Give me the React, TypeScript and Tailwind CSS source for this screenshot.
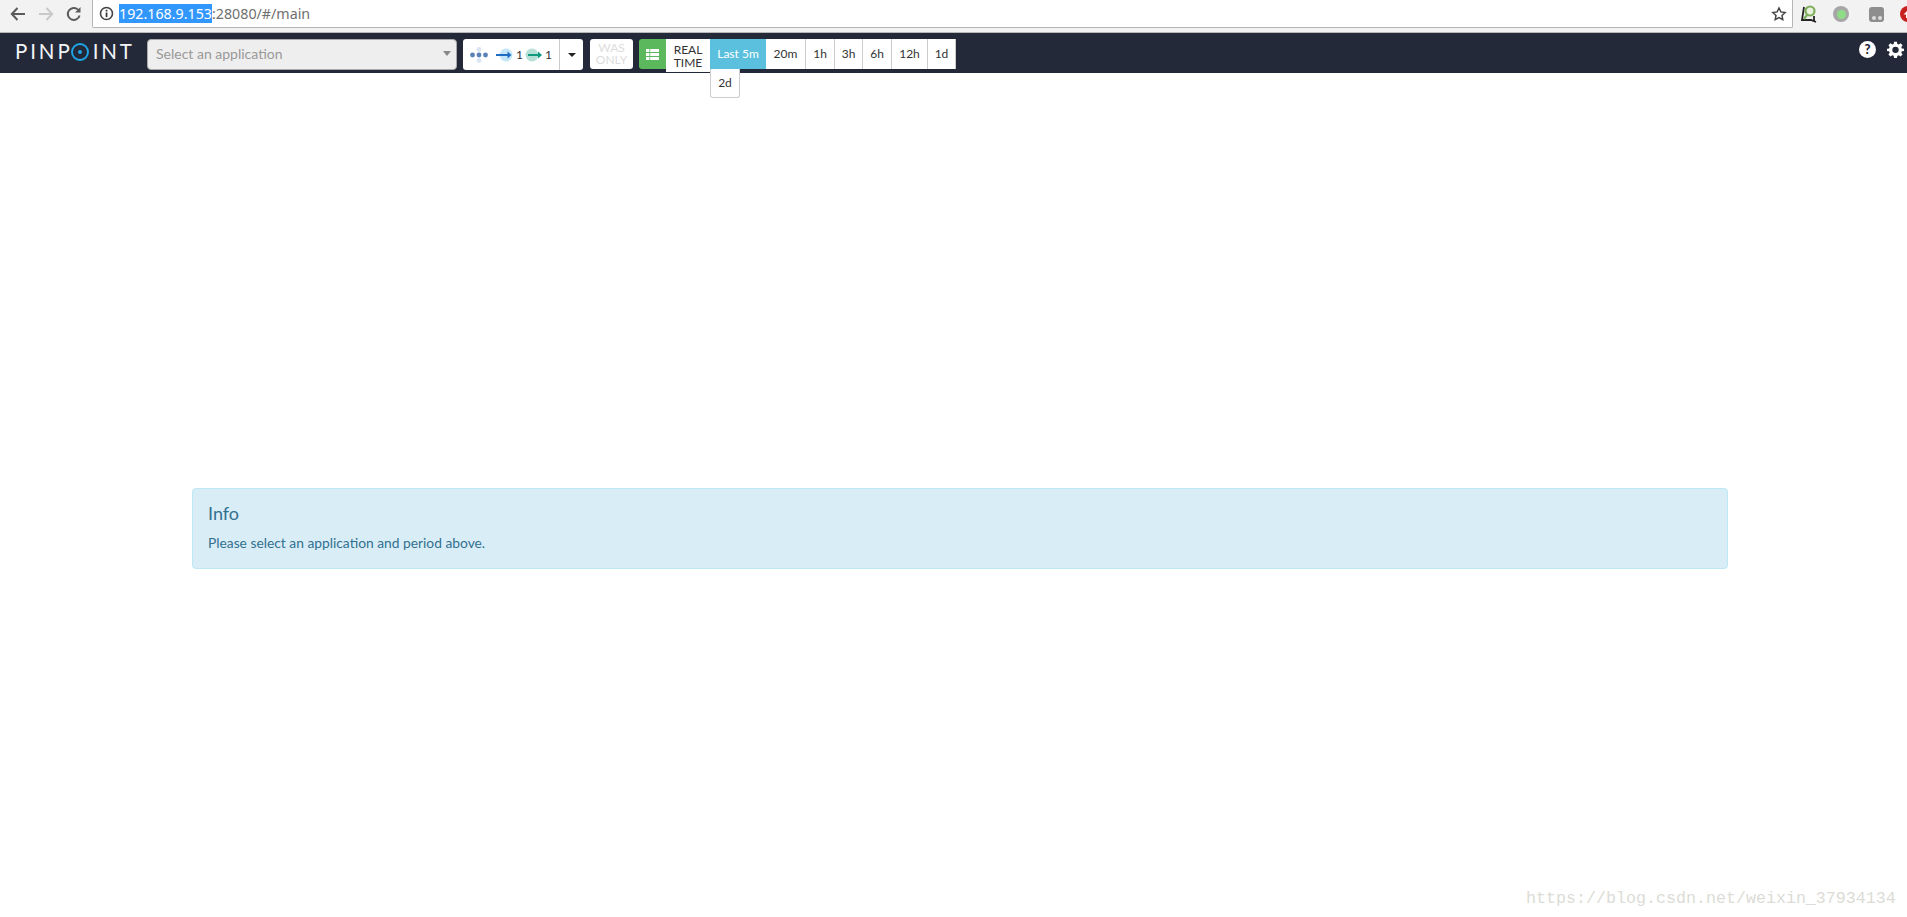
import React from "react";

const lato = { fontFamily: "Lato, 'Open Sans', sans-serif" };

function Logo() {
  return (
    <div className="flex items-center w-[118px] text-[#f2f4f6] text-[20.5px] leading-none font-normal tracking-[2.9px]" style={lato}>
      <span>PINP</span>
      <svg width="20" height="20" viewBox="0 0 20 20" className="shrink-0 mr-[3px] ml-[-3px]">
        <circle cx="10" cy="10" r="8" fill="none" stroke="#1ea7e8" strokeWidth="1.9" />
        <circle cx="10" cy="10" r="2" fill="#1ea7e8" />
      </svg>
      <span>INT</span>
    </div>
  );
}

function ChromeBar() {
  return (
    <div className="h-[33px] bg-[#f2f2f2] border-b border-[#b8b8b8] flex items-start overflow-hidden">
      <div className="w-[92px] h-[28px] flex items-center shrink-0 relative">
        <svg width="18" height="18" viewBox="0 0 18 18" className="ml-[9px]" fill="none" stroke="#5a5a5a" strokeWidth="2">
          <path d="M16 9H3M8.5 3 2.800 9l5.700 6" />
        </svg>
        <svg width="18" height="18" viewBox="0 0 18 18" className="ml-[10px]" fill="none" stroke="#c9c9c9" strokeWidth="2">
          <path d="M2 9h13M9.500 3l5.700 6-5.700 6" />
        </svg>
        <svg width="18" height="18" viewBox="0 0 18 18" className="ml-[10px]" fill="none" stroke="#5a5a5a" strokeWidth="2">
          <path d="M14.600 10.500A6 6 0 1 1 13 4.600" />
          <path d="M15.500 2v5.500H10" fill="#5a5a5a" stroke="none" />
        </svg>
      </div>
      <div className="w-[1701px] h-[28px] bg-white border border-[#b5b5b5] border-t-0 rounded-b-[2px] flex items-center shrink-0">
        <svg width="15" height="15" viewBox="0 0 15 15" className="ml-[6px] shrink-0">
          <circle cx="7.500" cy="7.500" r="6" fill="none" stroke="#444" strokeWidth="1.600" />
          <rect x="6.700" y="6.500" width="1.700" height="4.600" fill="#333" />
          <rect x="6.700" y="3.800" width="1.700" height="1.700" fill="#333" />
        </svg>
        <div className="ml-[5px] text-[14.25px] leading-[19px] whitespace-nowrap text-[#6f6f6f]" style={{ fontFamily: "'Noto Sans', sans-serif" }}>
          <span className="bg-[#3297fd] text-white">192.168.9.153</span>
          <span>:28080/#/main</span>
        </div>
        <svg width="16" height="16" viewBox="0 0 24 24" className="ml-auto mr-[5px]" fill="none" stroke="#444" strokeWidth="2.200">
          <path d="M12 3l2.800 5.900 6.400.8-4.700 4.400 1.200 6.400-5.700-3.100-5.700 3.100 1.200-6.400-4.700-4.400 6.400-.8z" />
        </svg>
      </div>
      <div className="flex-1 h-[28px] flex items-center pl-[7px] gap-[15px] min-w-0">
        <svg width="18" height="20" viewBox="0 0 18 20" className="shrink-0" fill="none">
          <path d="M4 3 2 16h9l5 2" stroke="#222" strokeWidth="1.800" />
          <circle cx="10" cy="7" r="4.500" stroke="#7fae5c" strokeWidth="2.200" fill="#e8f2de" />
          <path d="M7 11 4 15" stroke="#7fae5c" strokeWidth="2.200" />
          <path d="M14 12v5" stroke="#222" strokeWidth="1.800" />
        </svg>
        <div className="w-[16px] h-[16px] rounded-full bg-[#a6a6a6] flex items-center justify-center shrink-0">
          <div className="w-[9px] h-[9px] rounded-full bg-[#8fdc86]" />
        </div>
        <div className="w-[15px] h-[15px] rounded-[3px] bg-[#8e8e8e] shrink-0 flex items-end justify-center gap-[2px] pb-[2px] ml-[5px]">
          <div className="w-[4px] h-[4px] rounded-full bg-[#dcdcdc]" />
          <div className="w-[4px] h-[4px] rounded-full bg-[#dcdcdc]" />
        </div>
        <div className="w-[16px] h-[16px] rounded-full bg-[#c8201f] flex items-center justify-center shrink-0 ml-[1px]">
          <svg width="10" height="10" viewBox="0 0 10 10"><path d="M5 1 9.500 5.500H7V9H3V5.500H.5z" fill="#fff" /></svg>
        </div>
      </div>
    </div>
  );
}

function ServerMapPicker() {
  return (
    <div className="w-[120px] h-[31px] bg-white rounded-[3px] flex items-stretch shrink-0">
      <div className="w-[97px] border-r border-[#cccccc] flex items-center relative">
        <svg width="20" height="20" viewBox="0 0 20 20" className="ml-[6px] shrink-0">
          <circle cx="10" cy="4.500" r="2.400" fill="#dbe5f3" />
          <circle cx="10" cy="15.500" r="2.400" fill="#dbe5f3" />
          <circle cx="3.500" cy="10" r="2.400" fill="#5b82b8" />
          <circle cx="10" cy="10" r="2.400" fill="#5b82b8" />
          <circle cx="16.500" cy="10" r="2.400" fill="#5b82b8" />
        </svg>
        <svg width="18" height="14" viewBox="0 0 18 14" className="ml-[6px] shrink-0">
          <circle cx="11" cy="7" r="6.500" fill="#c4e6f8" />
          <path d="M1 7h13" stroke="#1f6cc4" strokeWidth="2" />
          <path d="M12.500 3.500 16.500 7l-4 3.500z" fill="#1f6cc4" />
        </svg>
        <span className="ml-[3px] text-[12px] text-[#333] leading-none" style={lato}>1</span>
        <svg width="18" height="14" viewBox="0 0 18 14" className="ml-[2px] shrink-0">
          <circle cx="7" cy="7" r="6.500" fill="#b6e0d6" />
          <path d="M3 7h12" stroke="#0f9a7e" strokeWidth="2" />
          <path d="M13 3.500 17 7l-4 3.500z" fill="#0f9a7e" />
        </svg>
        <span className="ml-[2px] text-[12px] text-[#333] leading-none" style={lato}>1</span>
      </div>
      <div className="flex-1 flex items-center justify-center">
        <div className="w-0 h-0 border-x-[4px] border-x-transparent border-t-[4px] border-t-[#222]" />
      </div>
    </div>
  );
}

function PeriodButton({ label, w }: { label: string; w: string }) {
  return (
    <div className={`${w} h-[30px] bg-white border-r border-[#cccccc] flex items-center justify-center text-[12px] text-[#333]`}>
      {label}
    </div>
  );
}

function NavBar() {
  return (
    <div className="h-[40px] bg-[#232939] relative flex items-start pl-[15px]" style={lato}>
      <div className="h-[33px] flex items-center shrink-0 mt-[2px]">
        <Logo />
      </div>
      <div className="w-[310px] h-[31px] mt-[6px] ml-[14px] bg-[#eeeeee] border border-[#aaaaaa] rounded-[4px] flex items-center justify-between pl-[8px] pr-[5px] pb-[2px] shrink-0">
        <span className="text-[14px] text-[#999999]">Select an application</span>
        <div className="w-0 h-0 border-x-[4px] border-x-transparent border-t-[5px] border-t-[#888888]" />
      </div>
      <div className="mt-[6px] ml-[6px]">
        <ServerMapPicker />
      </div>
      <div className="w-[43px] h-[30px] mt-[6px] ml-[7px] bg-white rounded-[3px] flex flex-col items-center justify-center text-[12px] leading-[12px] text-[#dddddd] shrink-0">
        <span>WAS</span>
        <span>ONLY</span>
      </div>
      <div className="w-[27px] h-[30px] mt-[6px] ml-[6px] bg-[#5cb85c] rounded-l-[3px] flex items-center justify-center shrink-0">
        <svg width="13" height="11" viewBox="0 0 13 11" fill="#fff">
          <rect x="0" y="0" width="3.400" height="3" /><rect x="4.200" y="0" width="8.800" height="3" />
          <rect x="0" y="4" width="3.400" height="3" /><rect x="4.200" y="4" width="8.800" height="3" />
          <rect x="0" y="8" width="3.400" height="3" /><rect x="4.200" y="8" width="8.800" height="3" />
        </svg>
      </div>
      <div className="w-[44px] h-[33px] mt-[6px] bg-white flex flex-col items-center justify-center text-[12px] leading-[13px] text-[#333] shrink-0">
        <span>REAL</span>
        <span>TIME</span>
      </div>
      <div className="relative mt-[6px] shrink-0">
        <div className="w-[56px] h-[30px] bg-[#5bc0de] flex items-center justify-center text-[12px] text-white">Last 5m</div>
        <div className="absolute left-0 top-[30px] w-[30px] h-[29px] bg-white border border-[#cccccc] border-t-0 rounded-b-[3px] flex items-center justify-center text-[12px] text-[#333]">2d</div>
      </div>
      <div className="mt-[6px] flex shrink-0">
        <PeriodButton label="20m" w="w-[40px]" />
        <PeriodButton label="1h" w="w-[29px]" />
        <PeriodButton label="3h" w="w-[28px]" />
        <PeriodButton label="6h" w="w-[29px]" />
        <PeriodButton label="12h" w="w-[36px]" />
        <PeriodButton label="1d" w="w-[28px]" />
      </div>
      <div className="ml-auto mr-[3px] mt-[8px] flex items-center gap-[11px]">
        <div className="w-[17px] h-[17px] rounded-full bg-white flex items-center justify-center text-[13px] font-black text-[#232939] leading-none">?</div>
        <svg width="17" height="17" viewBox="0 0 24 24" fill="#fff">
          <path fillRule="evenodd" d="M10 1h4l.6 3.100 1.900.8L19.200 3.100 22 5.900l-1.800 2.700.8 1.900L24 11v3l-3 .6-.8 1.900 1.800 2.700-2.800 2.800-2.700-1.800-1.900.8L14 23.900h-4l-.6-3.100-1.900-.8-2.700 1.800L2 19.200l1.800-2.700-.8-1.900L0 14v-3l3-.5.8-1.900L2 5.900l2.800-2.800 2.700 1.800 1.900-.8zM12 8a4.500 4.500 0 1 0 0 9 4.500 4.500 0 0 0 0-9z" />
        </svg>
      </div>
    </div>
  );
}

export default function App() {
  return (
    <div className="w-[1907px] h-[917px] bg-white overflow-hidden relative flex flex-col">
      <ChromeBar />
      <NavBar />
      <div className="flex-1 pl-[192px] pr-[179px] pt-[415px]" style={lato}>
        <div className="h-[81px] bg-[#d9edf7] border border-[#bce8f1] rounded-[4px] pl-[15px] pr-[16px] pt-[12px] text-[#31708f]">
          <div className="text-[18px] leading-[24px]">Info</div>
          <div className="text-[13.8px] leading-[20px] mt-[8px]">Please select an application and period above.</div>
        </div>
      </div>
      <div className="absolute left-[1526px] top-[887px] text-[16.67px] leading-[24px] text-[#dcdcd6] whitespace-nowrap" style={{ fontFamily: "'Liberation Mono', monospace" }}>
        https://blog.csdn.net/weixin_37934134
      </div>
    </div>
  );
}
